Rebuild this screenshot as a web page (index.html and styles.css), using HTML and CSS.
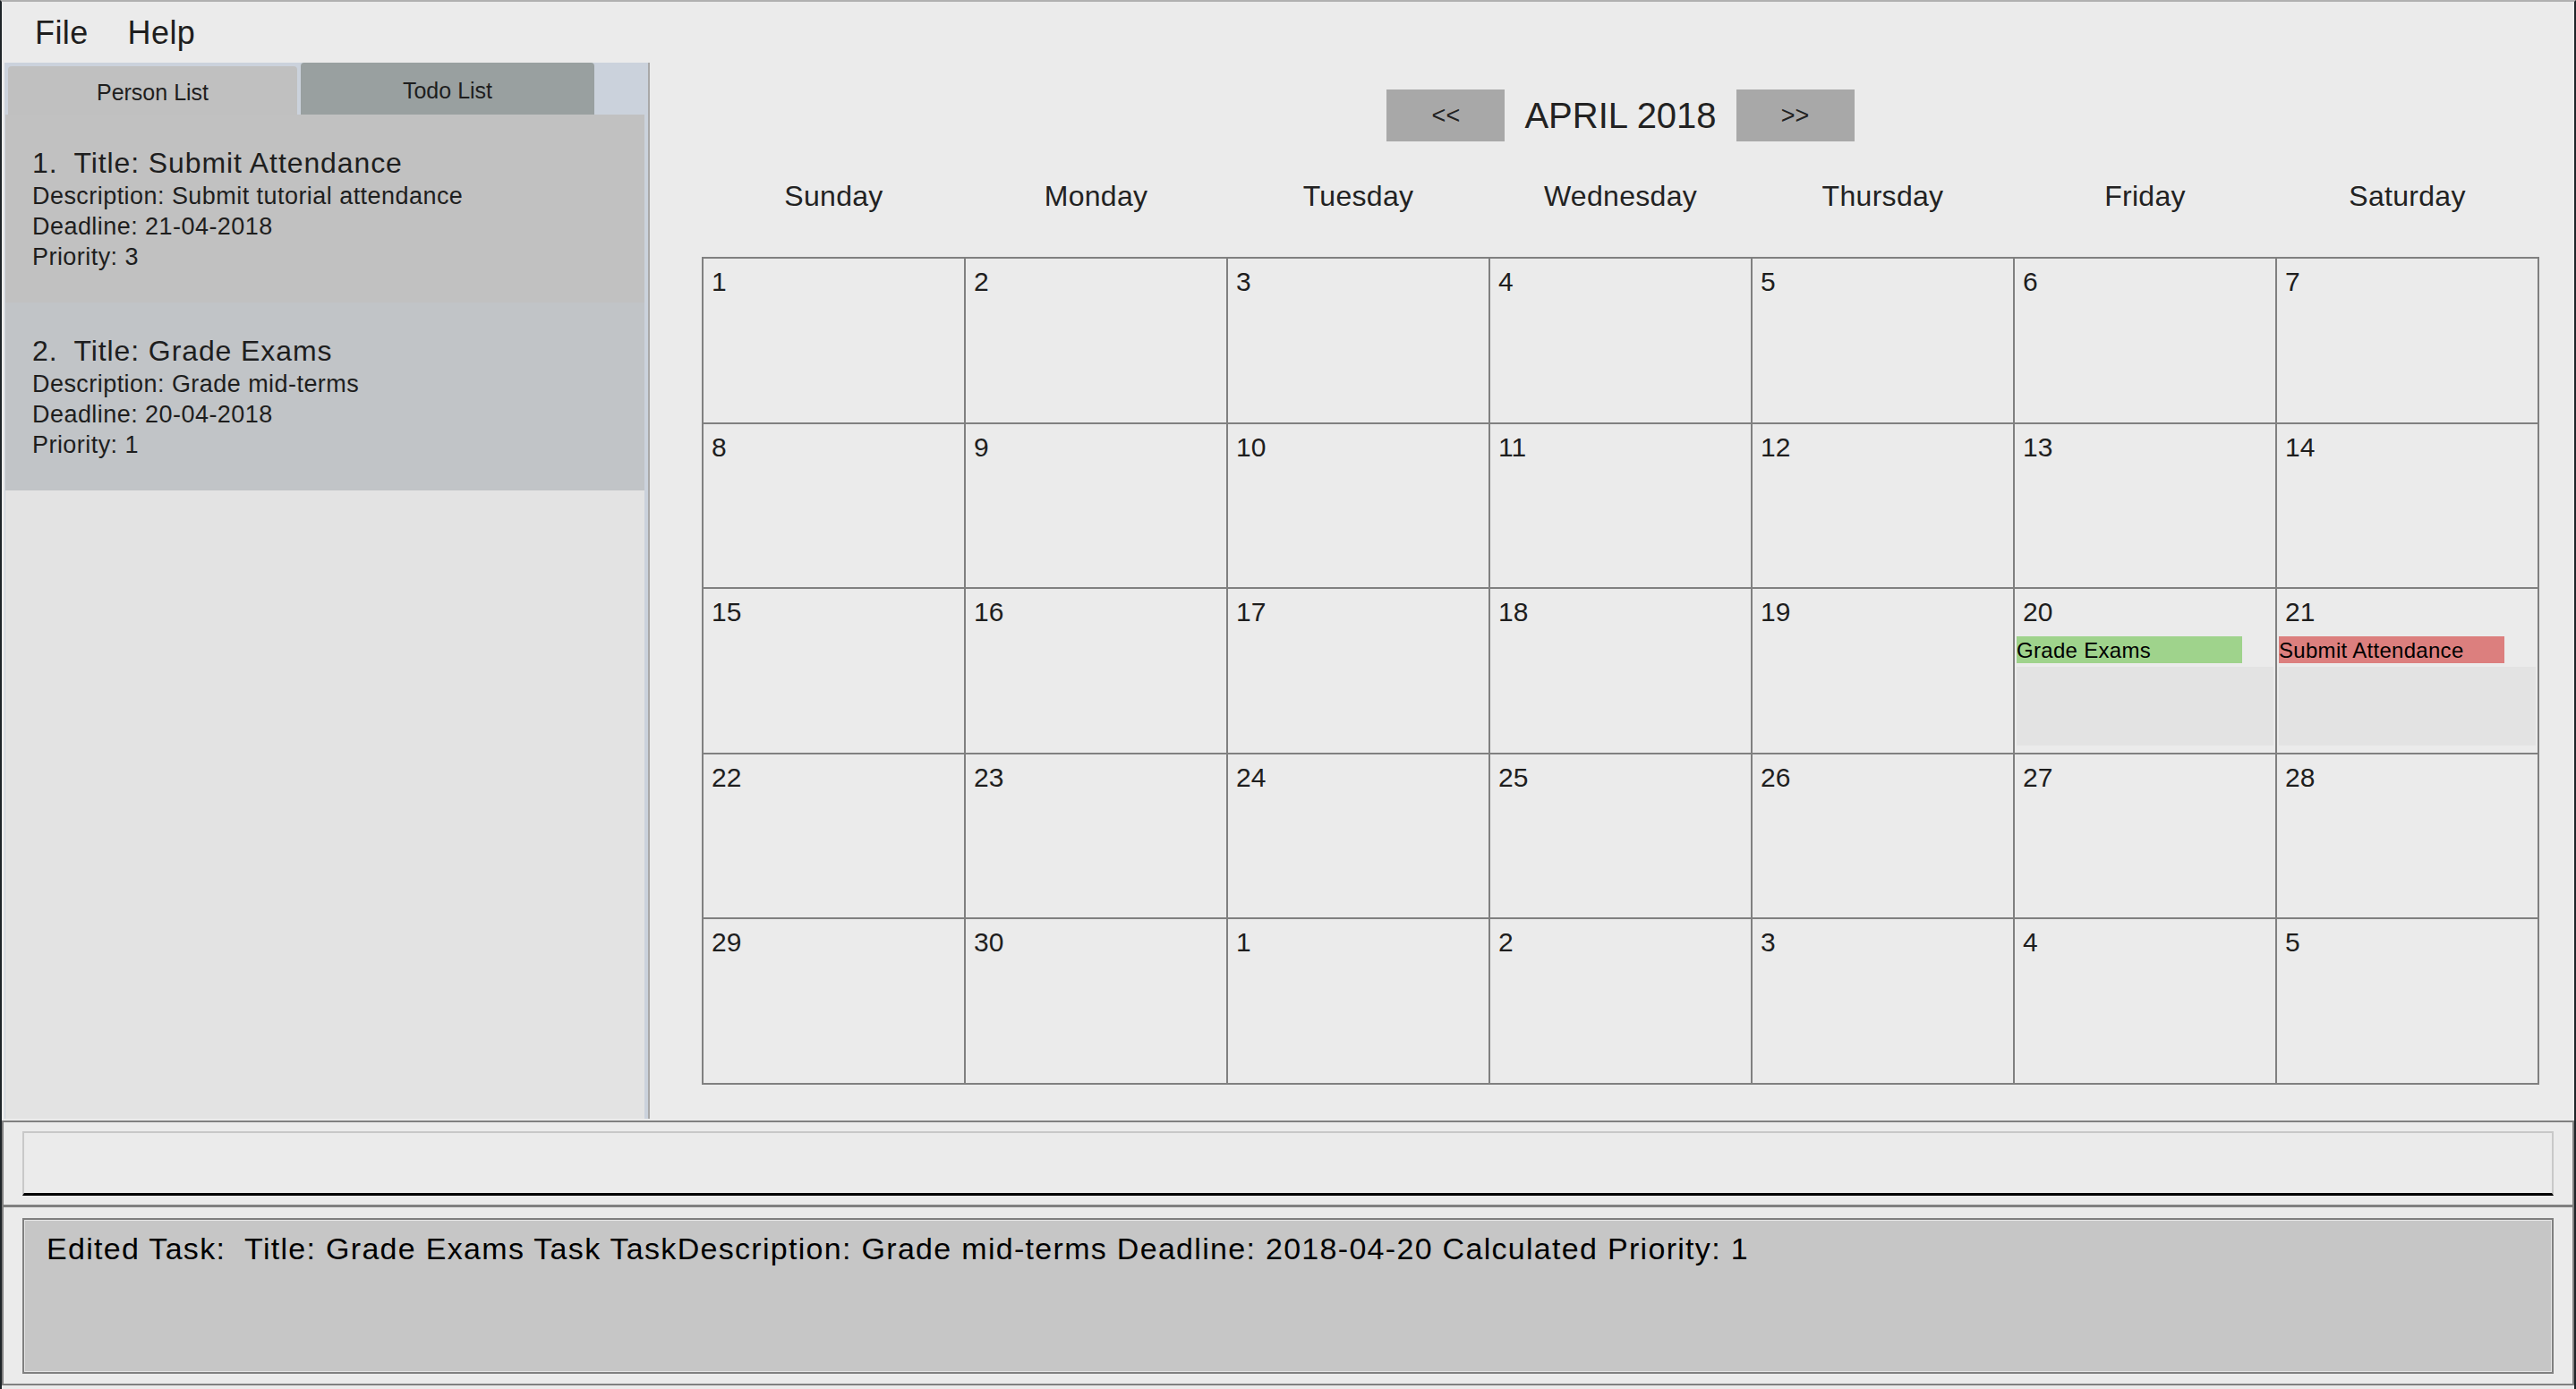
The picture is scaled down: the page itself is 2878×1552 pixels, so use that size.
FILE: index.html
```html
<!DOCTYPE html>
<html lang="en">
<head>
<meta charset="utf-8">
<title>Todo Calendar</title>
<link rel="stylesheet" href="styles.css">
</head>
<body>
<div class="window">
  <div class="menubar">
    <span class="menu-item">File</span>
    <span class="menu-item">Help</span>
  </div>
  <div class="main">
    <aside class="sidebar">
      <div class="tabs">
        <div class="tab tab-person">Person List</div>
        <div class="tab tab-todo">Todo List</div>
      </div>
      <div class="todo-list">
        <div class="card">
          <div class="card-title"><span class="card-id">1.</span>Title: Submit Attendance</div>
          <div class="card-line">Description: Submit tutorial attendance</div>
          <div class="card-line">Deadline: 21-04-2018</div>
          <div class="card-line">Priority: 3</div>
        </div>
        <div class="card card-alt">
          <div class="card-title"><span class="card-id">2.</span>Title: Grade Exams</div>
          <div class="card-line">Description: Grade mid-terms</div>
          <div class="card-line">Deadline: 20-04-2018</div>
          <div class="card-line">Priority: 1</div>
        </div>
      </div>
    </aside>
    <section class="calendar">
      <div class="cal-head">
        <button class="nav-btn">&lt;&lt;</button>
        <span class="month">APRIL 2018</span>
        <button class="nav-btn">&gt;&gt;</button>
      </div>
      <div class="weekdays">
        <div>Sunday</div><div>Monday</div><div>Tuesday</div><div>Wednesday</div><div>Thursday</div><div>Friday</div><div>Saturday</div>
      </div>
      <div class="grid">
        <div class="cell"><div class="num">1</div></div>
        <div class="cell"><div class="num">2</div></div>
        <div class="cell"><div class="num">3</div></div>
        <div class="cell"><div class="num">4</div></div>
        <div class="cell"><div class="num">5</div></div>
        <div class="cell"><div class="num">6</div></div>
        <div class="cell"><div class="num">7</div></div>
        <div class="cell"><div class="num">8</div></div>
        <div class="cell"><div class="num">9</div></div>
        <div class="cell"><div class="num">10</div></div>
        <div class="cell"><div class="num">11</div></div>
        <div class="cell"><div class="num">12</div></div>
        <div class="cell"><div class="num">13</div></div>
        <div class="cell"><div class="num">14</div></div>
        <div class="cell"><div class="num">15</div></div>
        <div class="cell"><div class="num">16</div></div>
        <div class="cell"><div class="num">17</div></div>
        <div class="cell"><div class="num">18</div></div>
        <div class="cell"><div class="num">19</div></div>
        <div class="cell">
          <div class="num">20</div>
          <div class="events">
            <div class="event-row"><div class="event event-green">Grade Exams</div></div>
            <div class="event-empty"></div>
          </div>
        </div>
        <div class="cell">
          <div class="num">21</div>
          <div class="events">
            <div class="event-row"><div class="event event-red">Submit Attendance</div></div>
            <div class="event-empty"></div>
          </div>
        </div>
        <div class="cell"><div class="num">22</div></div>
        <div class="cell"><div class="num">23</div></div>
        <div class="cell"><div class="num">24</div></div>
        <div class="cell"><div class="num">25</div></div>
        <div class="cell"><div class="num">26</div></div>
        <div class="cell"><div class="num">27</div></div>
        <div class="cell"><div class="num">28</div></div>
        <div class="cell"><div class="num">29</div></div>
        <div class="cell"><div class="num">30</div></div>
        <div class="cell"><div class="num">1</div></div>
        <div class="cell"><div class="num">2</div></div>
        <div class="cell"><div class="num">3</div></div>
        <div class="cell"><div class="num">4</div></div>
        <div class="cell"><div class="num">5</div></div>
      </div>
    </section>
  </div>
  <div class="command-pane">
    <div class="command-box"></div>
  </div>
  <div class="result-pane">
    <div class="result-box">Edited Task:  Title: Grade Exams Task TaskDescription: Grade mid-terms Deadline: 2018-04-20 Calculated Priority: 1</div>
  </div>
</div>
</body>
</html>
```
FILE: styles.css
```css
* {
  box-sizing: border-box;
}

html, body {
  margin: 0;
  padding: 0;
  background: #ebebeb;
}

body {
  font-family: "Liberation Sans", Arial, sans-serif;
  color: #1e1e1e;
}

.window {
  width: 2878px;
  height: 1552px;
  border-left: 2px solid #1e2428;
  border-right: 2px solid #1e2428;
  border-top: 2px solid #b0b0b0;
  background: #ebebeb;
  display: flex;
  flex-direction: column;
}

/* Menu bar */
.menubar {
  height: 68px;
  flex: none;
  display: flex;
  padding: 2px 0 0 15px;
  line-height: 66px;
  font-size: 36px;
}

.menu-item {
  padding: 0 22px;
  letter-spacing: 0.4px;
}

/* Main area */
.main {
  height: 1182px;
  flex: none;
  display: flex;
}

.sidebar {
  width: 721px;
  margin: 0 0 2px 3px;
  background: #cbd2dc;
  border-right: 2px solid #a8a8a8;
  display: flex;
  flex-direction: column;
  flex: none;
}

.tabs {
  height: 58px;
  flex: none;
  display: flex;
  align-items: flex-end;
  gap: 4px;
  padding-left: 4px;
}

.tab {
  display: flex;
  align-items: center;
  justify-content: center;
  font-size: 25px;
  border-radius: 4px 4px 0 0;
  padding-top: 4px;
}

.tab-person {
  width: 323px;
  height: 54px;
  background: #c0c0c0;
}

.tab-todo {
  width: 328px;
  height: 58px;
  background: #99a0a0;
}

.todo-list {
  flex: 1;
  margin: 0 4px 0 1px;
  background: #e3e3e3;
}

.card {
  height: 210px;
  padding: 34px 30px 0;
  background: #c1c1c1;
}

.card-alt {
  background: #c1c4c7;
}

.card-title {
  font-size: 32px;
  line-height: 40px;
  letter-spacing: 0.9px;
}

.card-id {
  display: inline-block;
  margin-right: 18px;
}

.card-line {
  font-size: 27px;
  line-height: 34px;
  letter-spacing: 0.45px;
}

/* Calendar */
.calendar {
  flex: 1;
  padding: 30px 39px 0 58px;
  display: flex;
  flex-direction: column;
}

.cal-head {
  height: 58px;
  display: flex;
  justify-content: center;
  align-items: center;
  gap: 22px;
}

.nav-btn {
  width: 132px;
  height: 58px;
  border: none;
  background: #a8a8a8;
  font-family: "Liberation Sans", Arial, sans-serif;
  font-size: 27px;
  color: #222;
  padding: 0;
}

.month {
  font-size: 40px;
  color: #222;
}

.weekdays {
  margin-top: 41px;
  display: grid;
  grid-template-columns: repeat(7, 1fr);
  column-gap: 2px;
  padding: 0 2px;
  font-size: 32px;
  line-height: 40px;
  text-align: center;
  color: #222;
  letter-spacing: 0.3px;
}

.grid {
  margin-top: 48px;
  height: 925px;
  display: grid;
  grid-template-columns: repeat(7, 1fr);
  grid-template-rows: repeat(5, 1fr);
  gap: 2px;
  padding: 2px;
  background: #808080;
}

.cell {
  background: #ebebeb;
  padding: 8px 2px 0;
  min-width: 0;
}

.num {
  font-size: 30px;
  line-height: 36px;
  padding-left: 7px;
  color: #1e1e1e;
}

.events {
  margin-top: 9px;
  height: 122px;
  display: flex;
  flex-direction: column;
  gap: 4px;
}

.event-row {
  height: 30px;
  flex: none;
}

.event {
  width: 252px;
  height: 30px;
  font-size: 24px;
  line-height: 30px;
  padding-top: 1px;
  color: #000;
  white-space: nowrap;
  letter-spacing: 0.3px;
}

.event-green {
  background: #9fd38c;
}

.event-red {
  background: #dc7f7e;
}

.event-empty {
  flex: 1;
  background: #e3e3e3;
}

/* Command box */
.command-pane {
  height: 94px;
  flex: none;
  border: 2px solid #808080;
  border-bottom: none;
  padding: 10px 21px;
}

.command-box {
  height: 72px;
  border: 2px solid #c8c8c8;
  border-bottom: 3px solid #000;
  background: #ebebeb;
}

/* Result display */
.result-pane {
  height: 202px;
  flex: none;
  border: 2px solid #808080;
  border-top-width: 3px;
  padding: 12px 21px 11px;
}

.result-box {
  height: 174px;
  border: 2px solid #808080;
  box-shadow: inset 0 0 0 1px #e6e6e6;
  background: #c6c6c6;
  padding: 12px 25px 0;
  font-size: 34px;
  line-height: 40px;
  letter-spacing: 1.3px;
  color: #000;
  white-space: pre;
}
```
